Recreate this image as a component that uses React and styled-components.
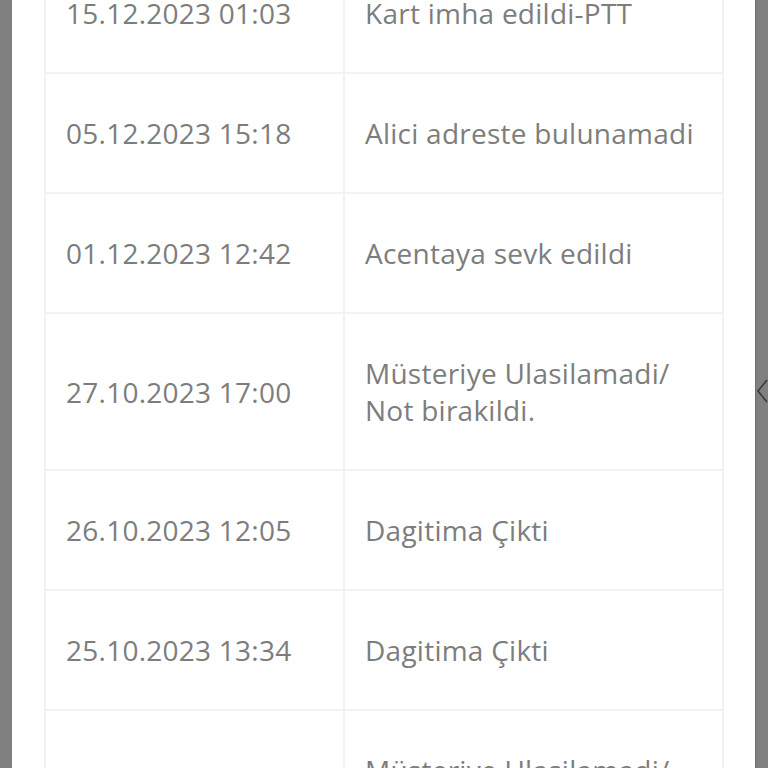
import React from "react";
import styled, { createGlobalStyle } from "styled-components";

const GlobalStyle = createGlobalStyle`
  html, body {
    margin: 0;
    padding: 0;
    background: #808080;
    overflow: hidden;
  }
`;

const Page = styled.div`
  position: relative;
  height: 768px;
  overflow: hidden;
`;

const Panel = styled.div`
  margin: 0 12px;
  height: 768px;
  background: #fff;
  padding: 0 31px 0 32px;
  overflow: hidden;
  border-right: 1px solid #6f6f6f;
  box-sizing: border-box;
`;

const Table = styled.table`
  width: 100%;
  margin-top: -48px;
  border-collapse: separate;
  border-spacing: 2px;
  background: #f2f2f2;
  table-layout: fixed;
`;

const Cell = styled.td`
  box-sizing: border-box;
  background: #fff;
  width: ${(props) => props.$width || "auto"};
  padding: 41px 20px 40px;
  font-family: "Open Sans", sans-serif;
  font-size: 28px;
  line-height: 37px;
  letter-spacing: 0.25px;
  color: #7d7d7d;
  vertical-align: middle;
`;

const Chevron = styled.div`
  position: absolute;
  right: 0;
  top: 378px;
  width: 12px;
  height: 26px;
`;

const rows = [
  ["15.12.2023 01:03", "Kart imha edildi-PTT"],
  ["05.12.2023 15:18", "Alici adreste bulunamadi"],
  ["01.12.2023 12:42", "Acentaya sevk edildi"],
  ["27.10.2023 17:00", "Müsteriye Ulasilamadi/ Not birakildi."],
  ["26.10.2023 12:05", "Dagitima Çikti"],
  ["25.10.2023 13:34", "Dagitima Çikti"],
  ["", "Müsteriye Ulasilamadi/ Not birakildi."],
];

export default function App() {
  return (
    <Page>
      <GlobalStyle />
      <Panel>
        <Table>
          <tbody>
            {rows.map(([date, status], i) => (
              <tr key={i}>
                <Cell $width="297px">{date}</Cell>
                <Cell>{status}</Cell>
              </tr>
            ))}
          </tbody>
        </Table>
      </Panel>
      <Chevron>
        <svg width="12" height="26" viewBox="0 0 12 26">
          <path d="M11 2 L2 13 L11 24" fill="none" stroke="#3a3a3a" strokeWidth="1.6" />
        </svg>
      </Chevron>
    </Page>
  );
}
